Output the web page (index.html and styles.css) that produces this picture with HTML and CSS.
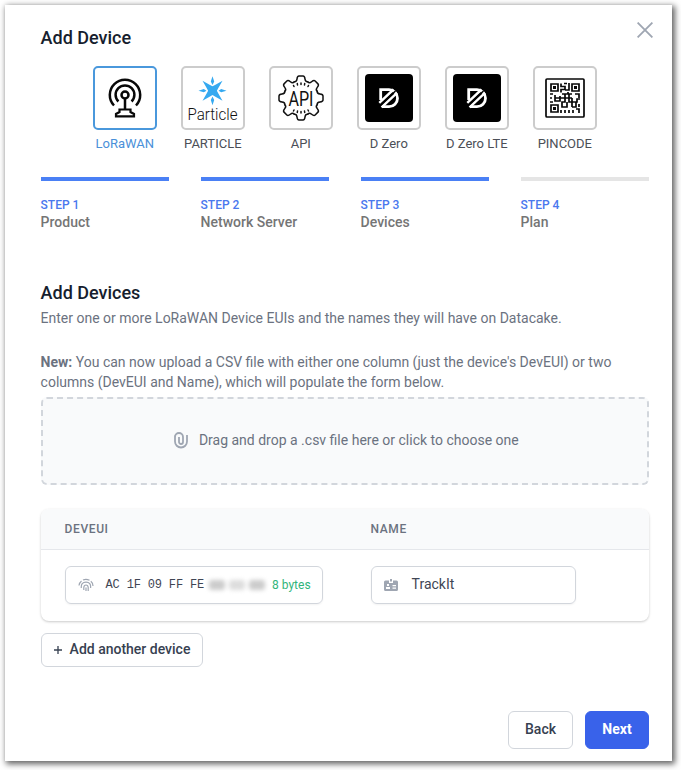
FILE: index.html
```html
<!DOCTYPE html>
<html lang="en">
<head>
<meta charset="utf-8">
<title>Add Device</title>
<link rel="stylesheet" href="styles.css">
</head>
<body>
<svg class="defs" width="0" height="0" aria-hidden="true">
  <symbol id="dzero" viewBox="0 0 48 48">
    <rect width="48" height="48" rx="4"/>
    <path d="M15.700 26V15.700H24a8.500 8.500 0 0 1 0 17h-7" fill="none" stroke="#fff" stroke-width="2.800"/>
    <path d="M14.300 28.800L28.500 15.500M16.500 33.300L32 18.800" fill="none" stroke="#fff" stroke-width="2.400"/>
    <path d="M13 33.500L30.500 17" fill="none" stroke="#000" stroke-width="1.500"/>
  </symbol>
</svg>
<main class="modal">
  <header class="modal-head">
    <h1>Add Device</h1>
    <svg class="close" viewBox="0 0 14 14"><path d="M.5.500l13 13M13.500.500l-13 13"/></svg>
  </header>

  <div class="types">
    <div class="type active">
      <div class="tile"><svg viewBox="0 0 60 60" fill="none" stroke="#080808" stroke-width="2.500">
        <circle cx="30" cy="27" r="3.500"/>
        <path d="M23.400 33.500a9.400 9.400 0 1 1 13.200 0M19 37.500a15.200 15.200 0 1 1 22 0M30 31v10"/>
        <path d="M24.500 41.500h11v2.500l3.500 2v2.300h-18V46l3.500-2z" stroke-width="2.200"/>
      </svg></div>
      <span>LoRaWAN</span>
    </div>
    <div class="type">
      <div class="tile"><svg viewBox="0 0 60 60">
        <path fill="#35a9f0" d="M29.500 8.200l1.700 5.300-1.700 3.500-1.700-3.500zM29.500 37.200l1.700-5.300-1.700-3.500-1.700 3.500zM15.500 22.700l5.300-1.600 2.700 1.600-2.700 1.600zM43.500 22.700l-5.300-1.600-2.700 1.600 2.700 1.600zM19.500 12.700l7.500 4.300 2.500 1.300 2.500-1.300 7.500-4.300-4.300 7.500-1.300 2.500 1.300 2.500 4.300 7.500-7.500-4.300-2.500-1.300-2.500 1.300-7.500 4.300 4.300-7.500 1.300-2.500-1.300-2.500z"/>
        <text class="particle-word" x="4.500" y="51.500" textLength="50" lengthAdjust="spacingAndGlyphs">Particle</text>
      </svg></div>
      <span>PARTICLE</span>
    </div>
    <div class="type">
      <div class="tile"><svg viewBox="-30 -30 60 60">
        <g fill="none" stroke="#111" stroke-width="1.500" stroke-linecap="round">
          <path id="tooth" d="M-6.700-16.200Q-4.300-16-4-19Q-3.700-22 -2-22H2Q3.700-22 4-19Q4.300-16 6.700-16.200"/>
          <use href="#tooth" transform="rotate(45)"/><use href="#tooth" transform="rotate(90)"/><use href="#tooth" transform="rotate(135)"/><use href="#tooth" transform="rotate(180)"/><use href="#tooth" transform="rotate(225)"/><use href="#tooth" transform="rotate(270)"/><use href="#tooth" transform="rotate(315)"/>
          <path d="M-7-11.500l-.5-1M-3.500-13l-.2-1.500M0-13.500v-1.500M3.500-13l.2-1.500M7-11.500l.5-1M-7 12l-.5 1M-3.500 13l-.2 1.500M0 13.500v1.500M3.500 13l.2 1.500M7 12l.5 1"/>
        </g>
        <text class="api-word" x="-12.500" y="7.500" textLength="25" lengthAdjust="spacingAndGlyphs">API</text>
      </svg></div>
      <span>API</span>
    </div>
    <div class="type">
      <div class="tile"><svg class="dz"><use href="#dzero"/></svg></div>
      <span>D Zero</span>
    </div>
    <div class="type">
      <div class="tile"><svg class="dz"><use href="#dzero"/></svg></div>
      <span>D Zero LTE</span>
    </div>
    <div class="type">
      <div class="tile"><svg viewBox="0 0 60 60" fill="none" stroke="#080808" stroke-width="1.700">
        <rect x="11" y="11" width="38" height="38" rx="1"/>
        <path d="M16 16h7v7h-7zM37 16h7v7h-7zM16 37h7v7h-7z"/>
        <path d="M19.500 18v3M40.500 18v3M19.500 39v3" stroke-width="3"/>
        <path d="M26 15.500v3h4v3h-4v3M29 15.500h3M34 15v7h-4M15 26h3M15 30h2M15 34h3M20 30h17M20 27v6h5v-5M27 26h6v-2M30 26v8h-3v5h5v-5M37 26h-3v8h8v-3h3M40 26h4v4M37 30v9M41 34v5h-4M44 36v3M26 42v3M30 42v3M34 42v3M38 42v3M41 41h3v4"/>
      </svg></div>
      <span>PINCODE</span>
    </div>
  </div>

  <ol class="steps">
    <li class="done"><b>STEP 1</b><span>Product</span></li>
    <li class="done"><b>STEP 2</b><span>Network Server</span></li>
    <li class="done"><b>STEP 3</b><span>Devices</span></li>
    <li><b>STEP 4</b><span>Plan</span></li>
  </ol>

  <section>
    <h2>Add Devices</h2>
    <p>Enter one or more LoRaWAN Device EUIs and the names they will have on Datacake.</p>
    <p class="note"><b>New:</b> You can now upload a CSV file with either one column (just the device's DevEUI) or two columns (DevEUI and Name), which will populate the form below.</p>

    <div class="drop">
      <svg class="clip" viewBox="0 0 16 18"><path d="M2 3.500V9.500a6 6 0 0 0 12 0V3M2 9V5a4 4 0 0 1 8 0v5a2 2 0 0 1-4 0V5"/></svg>
      <span>Drag and drop a .csv file here or click to choose one</span>
    </div>

    <div class="table">
      <div class="row head"><span>DEVEUI</span><span>NAME</span></div>
      <div class="row body">
        <div class="field eui">
          <svg class="finger" viewBox="0 0 16 14"><path d="M1 7.500Q1.500 4.500 3.500 3M5 2Q8 .5 11.500 2.200M12.800 3.300Q15 5 15 8M3.300 10Q2.800 4.200 8 4.200T12.600 10M5.800 12V9.500Q6 7 8 7T10.200 9.500V13M8 9.500V13"/></svg>
          <span class="mono">AC 1F 09 FF FE</span>
          <span class="masked"><i></i><i></i><i></i></span>
          <span class="bytes">8 bytes</span>
        </div>
        <div class="field name">
          <svg class="badge" viewBox="0 0 14 12"><path fill="#9fa6b2" d="M1.500 1.500H5V4h4V1.500h3.500A1.500 1.500 0 0 1 14 3v7.500a1.500 1.500 0 0 1-1.500 1.500h-11A1.500 1.500 0 0 1 0 10.500V3a1.500 1.500 0 0 1 1.500-1.500zM6 0h2v2.500H6z"/><path fill="#fff" d="M3 5h2v2H3zM2 8h4v2H2zM8.500 6H12v1.200H8.500zM8.500 8.500H12v1.200H8.500z"/></svg>
          <span>TrackIt</span>
        </div>
      </div>
    </div>

    <button class="btn add"><svg class="plus" viewBox="0 0 8 8"><path d="M4 0v8M0 4h8"/></svg>Add another device</button>
  </section>

  <footer>
    <button class="btn">Back</button>
    <button class="btn primary">Next</button>
  </footer>
</main>
</body>
</html>
```
FILE: styles.css
```css
* { box-sizing: border-box; }
body {
  margin: 0;
  padding: 5px 9px 9px 5px;
  height: 770px;
  background: #fff;
  font: 14px/20px Roboto, "Liberation Sans", sans-serif;
  color: #6b7280;
}
.defs { display: block; }
h1, h2, p, ol { margin: 0; padding: 0; }
.modal {
  display: flex;
  flex-direction: column;
  height: 756px;
  padding: 20px 23px 12px 35.6px;
  background: #fff;
  box-shadow: 2px 2px 6px 1px rgba(0, 0, 0, .62);
}
.modal-head {
  display: flex;
  justify-content: space-between;
  height: 41px;
}
h1, h2 {
  font-size: 18px;
  line-height: 24px;
  font-weight: 500;
  color: #161e2e;
}
h1 { padding-top: 1px; }
.close {
  width: 16px;
  height: 16px;
  margin: -3px -4px 0 0;
  fill: none;
  stroke: #9fa6b2;
  stroke-width: 1.6;
}
.types {
  display: flex;
  justify-content: center;
  gap: 24px;
}
.type {
  width: 64px;
  display: flex;
  flex-direction: column;
  align-items: center;
  font-size: 13px;
  color: #4b4f57;
  white-space: nowrap;
}
.type span { margin-top: 4px; line-height: 20px; }
.tile {
  width: 64px;
  height: 64px;
  border: 2px solid #ccc;
  border-radius: 5px;
  display: flex;
  align-items: center;
  justify-content: center;
}
.tile svg { width: 60px; height: 60px; }
.tile .dz { width: 48px; height: 48px; }
.active { color: #4a90d9; }
.active .tile { border-color: #4a98dc; }
.particle-word { font: 300 17px Roboto, sans-serif; fill: #111; }
.api-word { font: 400 20px Roboto, sans-serif; fill: #111; }
.steps {
  list-style: none;
  display: grid;
  grid-template-columns: repeat(4, 128px);
  gap: 32px;
  margin-top: 23px;
}
.steps li {
  border-top: 4px solid #e5e5e5;
  padding-top: 16px;
  display: flex;
  flex-direction: column;
  font-weight: 500;
}
.steps .done { border-color: #4a80f5; }
.steps b {
  font-size: 12px;
  line-height: 16px;
  font-weight: 500;
  color: #4a78ee;
}
.steps span { line-height: 18px; color: #757575; }
section { margin-top: 50px; }
h2 { margin-bottom: 3px; }
.note { margin-top: 24px; }
.note b { font-weight: 700; }
.drop {
  margin-top: 5px;
  height: 88px;
  border: 2px dashed #d2d6dc;
  border-radius: 6px;
  background: #f9fafb;
  display: flex;
  align-items: center;
  justify-content: center;
  gap: 10px;
  padding-left: 2px;
}
.drop span { margin-top: -2px; }
.clip { width: 16px; height: 18px; fill: none; stroke: #9fa6b2; stroke-width: 1.8; }
.table {
  margin-top: 24px;
  height: 112px;
  border-radius: 8px;
  box-shadow: 0 1px 3px rgba(0, 0, 0, .14), 0 1px 2px rgba(0, 0, 0, .08);
  overflow: hidden;
}
.row {
  display: grid;
  grid-template-columns: 258px 205px;
  column-gap: 48px;
  padding: 0 24px;
  align-items: center;
}
.head {
  height: 41px;
  background: #f9fafb;
  border-bottom: 1px solid #e5e7eb;
  font-size: 12px;
  font-weight: 500;
  letter-spacing: .6px;
}
.body { height: 70px; }
.field {
  height: 38px;
  border: 1px solid #d2d6dc;
  border-radius: 6px;
  box-shadow: 0 1px 2px rgba(0, 0, 0, .05);
  display: flex;
  align-items: center;
  padding: 0 11px 0 12px;
  color: #3f4654;
  white-space: nowrap;
}
.finger { width: 16px; height: 14px; fill: none; stroke: #9fa6b2; stroke-width: 1.2; }
.mono {
  margin-left: 12px;
  font: 12px/20px "Liberation Mono", monospace;
  letter-spacing: -.17px;
}
.masked { display: flex; gap: 4px; margin-left: 5px; filter: blur(2px); }
.masked i { width: 16px; height: 10px; border-radius: 3px; background: #ccc; }
.masked i:nth-child(2) { background: #ddd; }
.bytes { margin-left: auto; font-size: 12px; color: #31b57b; }
.badge { width: 14px; height: 12px; }
.name span { margin-left: 14px; margin-top: -2px; }
.btn {
  height: 38px;
  padding: 0 16px 2px;
  border: 1px solid #d2d6dc;
  border-radius: 6px;
  background: #fff;
  font: 500 14px/20px Roboto, sans-serif;
  color: #374151;
}
.add {
  display: flex;
  align-items: center;
  gap: 8px;
  width: 162px;
  height: 34px;
  margin-top: 12px;
  padding: 0 0 2px 12px;
  white-space: nowrap;
}
.plus { width: 8px; height: 8px; margin-top: 2px; fill: none; stroke: #374151; stroke-width: 1.3; }
footer {
  margin-top: auto;
  display: flex;
  justify-content: flex-end;
  gap: 12px;
}
.primary { width: 64px; background: #3962ea; border-color: #3962ea; color: #fff; font-weight: 700; }
```
